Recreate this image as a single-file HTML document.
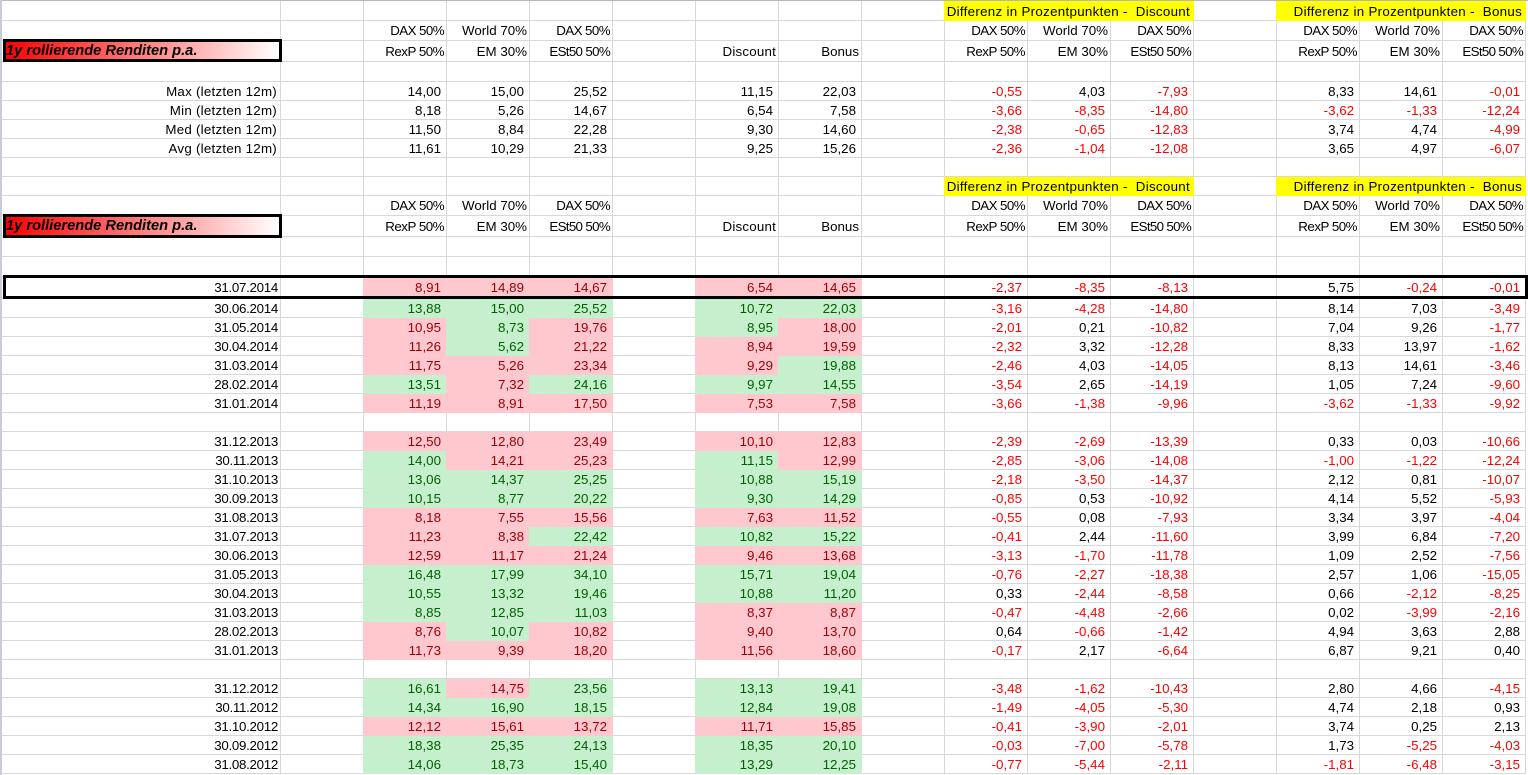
<!DOCTYPE html>
<html><head><meta charset="utf-8"><title>Renditen</title>
<style>
html,body{margin:0;padding:0;background:#fff;width:1528px;height:775px;overflow:hidden}
#top{position:absolute;left:0;top:0;width:1528px;height:1px;background:#b4b8bc}
#left{position:absolute;left:0;top:0;width:2px;height:775px;background:#c8ccd4}
table{position:absolute;left:2px;top:1px;border-collapse:separate;border-spacing:0;table-layout:fixed;width:1526px;font:13.33px "Liberation Sans",sans-serif;color:#000}
td{box-sizing:border-box;padding:2px 5px 0 0;border-right:1px solid #d8d8d8;border-bottom:1px solid #d8d8d8;text-align:right;white-space:pre;overflow:hidden;vertical-align:middle;line-height:14px}
td.d{padding-right:2px;letter-spacing:-.3px}
td.l{padding-right:3px;letter-spacing:.25px}
td.e{border:0;border-bottom:0}
tr.h td{padding-right:2px;padding-top:1px}
tr.b td{padding-top:0}
td.x{letter-spacing:-.57px}
td.k{letter-spacing:-.5px}
td.s{letter-spacing:-.67px}
td.w{letter-spacing:.2px}
td.p{background:#ffc7ce;color:#9c0006;border-color:#ffc7ce;box-shadow:-1px 0 0 #ffc7ce}
td.g{background:#c6efce;color:#006100;border-color:#c6efce;box-shadow:-1px 0 0 #c6efce}
td.r{color:#f00}
td.y{background:#ff0;border-color:#ff0;box-shadow:-1px 0 0 #ff0;padding-right:3px;letter-spacing:.3px}
tr.a{height:19px}
.box{position:absolute;box-sizing:border-box;border:3px solid #000}
.ti{left:3px;width:279px;padding-top:1px;background:linear-gradient(90deg,#f00,#fff);font:italic bold 14.67px/17px "Liberation Sans",sans-serif;color:#000;white-space:nowrap}
</style></head><body>
<div id="top"></div><div id="left"></div>
<table>
<colgroup><col style="width:279px"><col style="width:83px"><col style="width:83px"><col style="width:83px"><col style="width:83px"><col style="width:83px"><col style="width:83px"><col style="width:83px"><col style="width:83px"><col style="width:83px"><col style="width:83px"><col style="width:83px"><col style="width:83px"><col style="width:83px"><col style="width:83px"><col style="width:83px"><col style="width:2px"></colgroup>
<tr style="height:20px"><td><td><td><td><td><td><td><td><td><td class=y colspan=3>Differenz in Prozentpunkten -  Discount<td><td class=y colspan=3>Differenz in Prozentpunkten -  Bonus<td class=e></tr>
<tr class=h style="height:20px"><td><td><td class=x>DAX 50%<td>World 70%<td class=x>DAX 50%<td><td><td><td><td class=x>DAX 50%<td>World 70%<td class=x>DAX 50%<td><td class=x>DAX 50%<td>World 70%<td class=x>DAX 50%<td class=e></tr>
<tr class=h style="height:21px"><td><td><td class=k>RexP 50%<td>EM 30%<td class=s>ESt50 50%<td><td class=w>Discount<td>Bonus<td><td class=k>RexP 50%<td>EM 30%<td class=s>ESt50 50%<td><td class=k>RexP 50%<td>EM 30%<td class=s>ESt50 50%<td class=e></tr>
<tr style="height:20px"><td><td><td><td><td><td><td><td><td><td><td><td><td><td><td><td><td class=e></tr>
<tr class=a><td class=l>Max (letzten 12m)<td><td>14,00<td>15,00<td>25,52<td><td>11,15<td>22,03<td><td class=r>-0,55<td>4,03<td class=r>-7,93<td><td>8,33<td>14,61<td class=r>-0,01<td class=e></tr>
<tr class=a><td class=l>Min (letzten 12m)<td><td>8,18<td>5,26<td>14,67<td><td>6,54<td>7,58<td><td class=r>-3,66<td class=r>-8,35<td class=r>-14,80<td><td class=r>-3,62<td class=r>-1,33<td class=r>-12,24<td class=e></tr>
<tr class=a><td class=l>Med (letzten 12m)<td><td>11,50<td>8,84<td>22,28<td><td>9,30<td>14,60<td><td class=r>-2,38<td class=r>-0,65<td class=r>-12,83<td><td>3,74<td>4,74<td class=r>-4,99<td class=e></tr>
<tr class=a><td class=l>Avg (letzten 12m)<td><td>11,61<td>10,29<td>21,33<td><td>9,25<td>15,26<td><td class=r>-2,36<td class=r>-1,04<td class=r>-12,08<td><td>3,65<td>4,97<td class=r>-6,07<td class=e></tr>
<tr class=a><td><td><td><td><td><td><td><td><td><td><td><td><td><td><td><td><td class=e></tr>
<tr class=a><td><td><td><td><td><td><td><td><td><td class=y colspan=3>Differenz in Prozentpunkten -  Discount<td><td class=y colspan=3>Differenz in Prozentpunkten -  Bonus<td class=e></tr>
<tr class=h style="height:20px"><td><td><td class=x>DAX 50%<td>World 70%<td class=x>DAX 50%<td><td><td><td><td class=x>DAX 50%<td>World 70%<td class=x>DAX 50%<td><td class=x>DAX 50%<td>World 70%<td class=x>DAX 50%<td class=e></tr>
<tr class=h style="height:21px"><td><td><td class=k>RexP 50%<td>EM 30%<td class=s>ESt50 50%<td><td class=w>Discount<td>Bonus<td><td class=k>RexP 50%<td>EM 30%<td class=s>ESt50 50%<td><td class=k>RexP 50%<td>EM 30%<td class=s>ESt50 50%<td class=e></tr>
<tr style="height:20px"><td><td><td><td><td><td><td><td><td><td><td><td><td><td><td><td><td class=e></tr>
<tr style="height:20px"><td><td><td><td><td><td><td><td><td><td><td><td><td><td><td><td><td class=e></tr>
<tr class=b style="height:22px"><td class=d>31.07.2014<td><td class=p>8,91<td class=p>14,89<td class=p>14,67<td><td class=p>6,54<td class=p>14,65<td><td class=r>-2,37<td class=r>-8,35<td class=r>-8,13<td><td>5,75<td class=r>-0,24<td class=r>-0,01<td class=e></tr>
<tr class=a><td class=d>30.06.2014<td><td class=g>13,88<td class=g>15,00<td class=g>25,52<td><td class=g>10,72<td class=g>22,03<td><td class=r>-3,16<td class=r>-4,28<td class=r>-14,80<td><td>8,14<td>7,03<td class=r>-3,49<td class=e></tr>
<tr class=a><td class=d>31.05.2014<td><td class=p>10,95<td class=g>8,73<td class=p>19,76<td><td class=g>8,95<td class=p>18,00<td><td class=r>-2,01<td>0,21<td class=r>-10,82<td><td>7,04<td>9,26<td class=r>-1,77<td class=e></tr>
<tr class=a><td class=d>30.04.2014<td><td class=p>11,26<td class=g>5,62<td class=p>21,22<td><td class=p>8,94<td class=p>19,59<td><td class=r>-2,32<td>3,32<td class=r>-12,28<td><td>8,33<td>13,97<td class=r>-1,62<td class=e></tr>
<tr class=a><td class=d>31.03.2014<td><td class=p>11,75<td class=p>5,26<td class=p>23,34<td><td class=p>9,29<td class=g>19,88<td><td class=r>-2,46<td>4,03<td class=r>-14,05<td><td>8,13<td>14,61<td class=r>-3,46<td class=e></tr>
<tr class=a><td class=d>28.02.2014<td><td class=g>13,51<td class=p>7,32<td class=g>24,16<td><td class=g>9,97<td class=g>14,55<td><td class=r>-3,54<td>2,65<td class=r>-14,19<td><td>1,05<td>7,24<td class=r>-9,60<td class=e></tr>
<tr class=a><td class=d>31.01.2014<td><td class=p>11,19<td class=p>8,91<td class=p>17,50<td><td class=p>7,53<td class=p>7,58<td><td class=r>-3,66<td class=r>-1,38<td class=r>-9,96<td><td class=r>-3,62<td class=r>-1,33<td class=r>-9,92<td class=e></tr>
<tr class=a><td><td><td><td><td><td><td><td><td><td><td><td><td><td><td><td><td class=e></tr>
<tr class=a><td class=d>31.12.2013<td><td class=p>12,50<td class=p>12,80<td class=p>23,49<td><td class=p>10,10<td class=p>12,83<td><td class=r>-2,39<td class=r>-2,69<td class=r>-13,39<td><td>0,33<td>0,03<td class=r>-10,66<td class=e></tr>
<tr class=a><td class=d>30.11.2013<td><td class=g>14,00<td class=p>14,21<td class=p>25,23<td><td class=g>11,15<td class=p>12,99<td><td class=r>-2,85<td class=r>-3,06<td class=r>-14,08<td><td class=r>-1,00<td class=r>-1,22<td class=r>-12,24<td class=e></tr>
<tr class=a><td class=d>31.10.2013<td><td class=g>13,06<td class=g>14,37<td class=g>25,25<td><td class=g>10,88<td class=g>15,19<td><td class=r>-2,18<td class=r>-3,50<td class=r>-14,37<td><td>2,12<td>0,81<td class=r>-10,07<td class=e></tr>
<tr class=a><td class=d>30.09.2013<td><td class=g>10,15<td class=g>8,77<td class=g>20,22<td><td class=g>9,30<td class=g>14,29<td><td class=r>-0,85<td>0,53<td class=r>-10,92<td><td>4,14<td>5,52<td class=r>-5,93<td class=e></tr>
<tr class=a><td class=d>31.08.2013<td><td class=p>8,18<td class=p>7,55<td class=p>15,56<td><td class=p>7,63<td class=p>11,52<td><td class=r>-0,55<td>0,08<td class=r>-7,93<td><td>3,34<td>3,97<td class=r>-4,04<td class=e></tr>
<tr class=a><td class=d>31.07.2013<td><td class=p>11,23<td class=p>8,38<td class=g>22,42<td><td class=g>10,82<td class=g>15,22<td><td class=r>-0,41<td>2,44<td class=r>-11,60<td><td>3,99<td>6,84<td class=r>-7,20<td class=e></tr>
<tr class=a><td class=d>30.06.2013<td><td class=p>12,59<td class=p>11,17<td class=p>21,24<td><td class=p>9,46<td class=p>13,68<td><td class=r>-3,13<td class=r>-1,70<td class=r>-11,78<td><td>1,09<td>2,52<td class=r>-7,56<td class=e></tr>
<tr class=a><td class=d>31.05.2013<td><td class=g>16,48<td class=g>17,99<td class=g>34,10<td><td class=g>15,71<td class=g>19,04<td><td class=r>-0,76<td class=r>-2,27<td class=r>-18,38<td><td>2,57<td>1,06<td class=r>-15,05<td class=e></tr>
<tr class=a><td class=d>30.04.2013<td><td class=g>10,55<td class=g>13,32<td class=g>19,46<td><td class=g>10,88<td class=g>11,20<td><td>0,33<td class=r>-2,44<td class=r>-8,58<td><td>0,66<td class=r>-2,12<td class=r>-8,25<td class=e></tr>
<tr class=a><td class=d>31.03.2013<td><td class=g>8,85<td class=g>12,85<td class=g>11,03<td><td class=p>8,37<td class=p>8,87<td><td class=r>-0,47<td class=r>-4,48<td class=r>-2,66<td><td>0,02<td class=r>-3,99<td class=r>-2,16<td class=e></tr>
<tr class=a><td class=d>28.02.2013<td><td class=p>8,76<td class=g>10,07<td class=p>10,82<td><td class=p>9,40<td class=p>13,70<td><td>0,64<td class=r>-0,66<td class=r>-1,42<td><td>4,94<td>3,63<td>2,88<td class=e></tr>
<tr class=a><td class=d>31.01.2013<td><td class=p>11,73<td class=p>9,39<td class=p>18,20<td><td class=p>11,56<td class=p>18,60<td><td class=r>-0,17<td>2,17<td class=r>-6,64<td><td>6,87<td>9,21<td>0,40<td class=e></tr>
<tr class=a><td><td><td><td><td><td><td><td><td><td><td><td><td><td><td><td><td class=e></tr>
<tr class=a><td class=d>31.12.2012<td><td class=g>16,61<td class=p>14,75<td class=g>23,56<td><td class=g>13,13<td class=g>19,41<td><td class=r>-3,48<td class=r>-1,62<td class=r>-10,43<td><td>2,80<td>4,66<td class=r>-4,15<td class=e></tr>
<tr class=a><td class=d>30.11.2012<td><td class=g>14,34<td class=g>16,90<td class=g>18,15<td><td class=g>12,84<td class=g>19,08<td><td class=r>-1,49<td class=r>-4,05<td class=r>-5,30<td><td>4,74<td>2,18<td>0,93<td class=e></tr>
<tr class=a><td class=d>31.10.2012<td><td class=p>12,12<td class=p>15,61<td class=p>13,72<td><td class=p>11,71<td class=p>15,85<td><td class=r>-0,41<td class=r>-3,90<td class=r>-2,01<td><td>3,74<td>0,25<td>2,13<td class=e></tr>
<tr class=a><td class=d>30.09.2012<td><td class=g>18,38<td class=g>25,35<td class=g>24,13<td><td class=g>18,35<td class=g>20,10<td><td class=r>-0,03<td class=r>-7,00<td class=r>-5,78<td><td>1,73<td class=r>-5,25<td class=r>-4,03<td class=e></tr>
<tr class=a><td class=d>31.08.2012<td><td class=g>14,06<td class=g>18,73<td class=g>15,40<td><td class=g>13,29<td class=g>12,25<td><td class=r>-0,77<td class=r>-5,44<td class=r>-2,11<td><td class=r>-1,81<td class=r>-6,48<td class=r>-3,15<td class=e></tr>
</table>
<div class="box ti" style="top:39px;height:23px">1y rollierende Renditen p.a.</div>
<div class="box ti" style="top:214px;height:24px">1y rollierende Renditen p.a.</div>
<div class="box" style="left:3px;top:275px;width:1525px;height:24px"></div>
</body></html>
